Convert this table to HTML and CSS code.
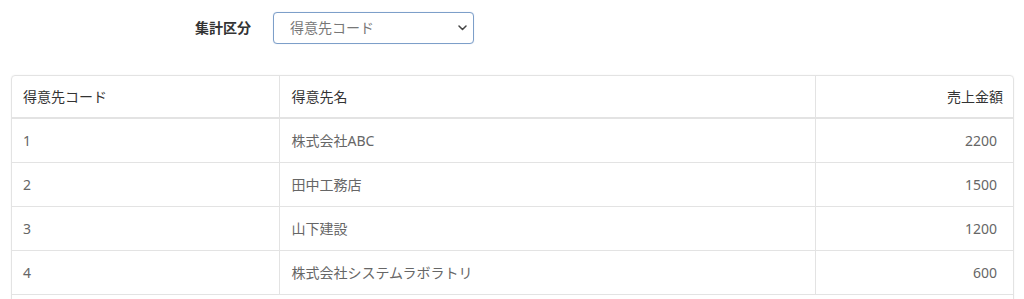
FILE: index.html
```html
<!DOCTYPE html>
<html lang="ja">
<head>
<meta charset="utf-8">
<link rel="stylesheet" href="styles.css">
</head>
<body>
<div class="filter">
  <label class="filter-label" for="grp">集計区分</label>
  <span class="select-wrap">
    <select id="grp" class="select">
      <option>得意先コード</option>
    </select>
    <svg class="chev" width="9" height="6" viewBox="0 0 9 6"><path d="M1 1l3.5 3.5L8 1" fill="none" stroke="#444" stroke-width="1.5" stroke-linecap="round" stroke-linejoin="round"/></svg>
  </span>
</div>
<div class="table-card">
  <table class="grid">
    <colgroup>
      <col class="c1"><col class="c2"><col class="c3">
    </colgroup>
    <thead>
      <tr><th>得意先コード</th><th>得意先名</th><th class="num">売上金額</th></tr>
    </thead>
    <tbody>
      <tr><td>1</td><td>株式会社ABC</td><td class="num">2200</td></tr>
      <tr><td>2</td><td>田中工務店</td><td class="num">1500</td></tr>
      <tr><td>3</td><td>山下建設</td><td class="num">1200</td></tr>
      <tr><td>4</td><td>株式会社システムラボラトリ</td><td class="num">600</td></tr>
    </tbody>
  </table>
  <div class="card-foot"></div>
</div>
</body>
</html>
```
FILE: styles.css
```css
html, body {
  margin: 0;
  padding: 0;
  background: #fff;
}
body {
  font-family: "Noto Sans", "Noto Sans CJK JP", sans-serif;
  font-size: 14px;
  color: #333;
}
.filter {
  display: flex;
  align-items: center;
  gap: 22px;
  padding: 12px 0 0 195px;
  height: 32px;
}
.filter-label {
  font-weight: bold;
  color: #333;
  line-height: 20px;
}
.select-wrap {
  position: relative;
  display: inline-block;
}
.select {
  appearance: none;
  -webkit-appearance: none;
  box-sizing: border-box;
  width: 201px;
  height: 32px;
  border: 1px solid #7d9fc9;
  border-radius: 4px;
  background: #fff;
  font-family: inherit;
  font-size: 14px;
  color: #777;
  padding: 0 30px 0 16px;
  line-height: 30px;
  outline: none;
  box-shadow: 0 0 1px rgba(80, 120, 180, 0.3);
}
.chev {
  position: absolute;
  right: 7px;
  top: 13px;
  pointer-events: none;
}
.table-card {
  margin: 31px 0 0 11px;
  width: 1003px;
  box-sizing: border-box;
  border: 1px solid #e3e3e3;
  border-radius: 4px 4px 0 0;
  box-shadow: 0 0 2px rgba(0, 0, 0, 0.06);
  overflow: hidden;
}
.grid {
  width: 100%;
  border-collapse: collapse;
  table-layout: fixed;
}
.c1 { width: 267px; }
.c2 { width: 536px; }
.c3 { width: auto; }
.grid th,
.grid td {
  text-align: left;
  line-height: 21px;
  border-left: 1px solid #e3e3e3;
  white-space: nowrap;
}
.grid th:first-child,
.grid td:first-child {
  border-left: none;
}
.grid th {
  font-weight: normal;
  color: #333;
  padding: 10px 10px 10px 11px;
  border-bottom: 2px solid #e3e3e3;
}
.grid td {
  color: #666;
  padding: 11px 16px 11px 11px;
  border-bottom: 1px solid #e3e3e3;
}
.grid td:nth-child(2),
.grid th:nth-child(2) {
  padding-left: 12px;
}
.grid .num {
  text-align: right;
}
.card-foot {
  height: 10px;
}
```
